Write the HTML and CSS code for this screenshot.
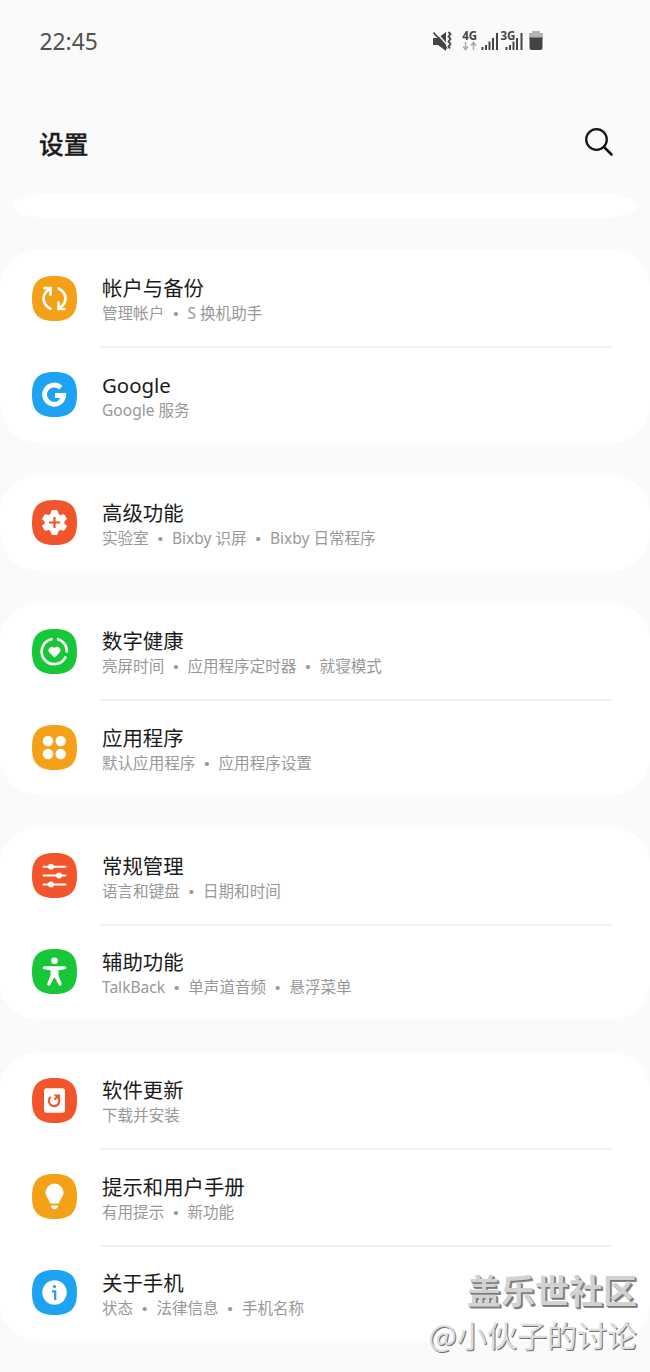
FILE: index.html
```html
<!DOCTYPE html>
<html lang="zh-CN">
<head>
<meta charset="utf-8">
<title>设置</title>
<link rel="stylesheet" href="styles.css">
</head>
<body>
<svg width="0" height="0" class="defs"><defs><path id="tile" d="M22.500 0C38.500 0 45 6.500 45 22.500S38.500 45 22.500 45 0 38.500 0 22.500 6.500 0 22.500 0Z"/></defs></svg>
<div class="status">
  <span class="clock">22:45</span>
  <svg class="status-icons" width="116" height="26" viewBox="0 0 116 26">
    <g fill="#444">
      <path d="M3 9h5l8-6v19l-8-6H3z"/>
      <path d="M4.500 1.500l15 17" stroke="#fafafa" stroke-width="1.500"/>
      <path d="M3.500 3.500l14 16" stroke="#444" stroke-width="1.800"/>
      <path d="M18.500 3l2 2-2 2.500 2 2.500-2 2.500 2 2.500-2 2.500 1.500 2" fill="none" stroke="#fafafa" stroke-width="3.500"/>
      <path d="M18.500 3l2 2-2 2.500 2 2.500-2 2.500 2 2.500-2 2.500 1.500 2" fill="none" stroke="#444" stroke-width="1.800"/>
      <text class="net" x="32.300" y="10.500">4G</text>
      <text class="net" x="70.500" y="10.500">3G</text>
      <path d="M51.500 18h2v3h-2zM55 16h2v5h-2zM58.500 12.500h2V21h-2zM62 9h2v12h-2zM66 4h2v17h-2z"/>
      <path d="M75.500 18h2v3h-2zM79 16h2v5h-2zM82.500 12.500h2V21h-2zM86 9h2v12h-2zM90.500 4h2v17h-2z"/>
      <path d="M35.500 13v7m-2.500-2.500l2.500 3 2.500-3M43.500 21v-7m-2.500 2.500l2.500-3 2.500 3" fill="none" stroke="#aaa" stroke-width="1.500"/>
      <path d="M102 2h8v2h3v6H99V4h3z" fill="#b3b3b3"/>
      <path d="M99.500 8.500h13V19q0 2-2 2h-9q-2 0-2-2z"/>
    </g>
  </svg>
</div>
<header class="header">
  <h1>设置</h1>
  <svg width="30" height="30" viewBox="0 0 30 30" fill="none" stroke="#151515"><circle cx="12.500" cy="12.500" r="10.300" stroke-width="2.300"/><path d="M20 20l7.500 7.500" stroke-width="2.600" stroke-linecap="round"/></svg>
</header>
<div class="card-edge"></div>
<main class="groups">
  <section class="card">
    <div class="row">
      <svg class="icon orange" viewBox="0 0 45 45"><use href="#tile"/><g fill="none" stroke="#fff" stroke-width="2.700" stroke-linecap="round"><path d="M18.500 32.700C9.500 28 9.500 18.500 17 13.500M12.500 12.200h6v6.500M26.500 12.500C35.500 17 35.500 26.500 28 31.500M32.500 33h-6v-6.500"/></g></svg>
      <div class="text"><div class="title">帐户与备份</div><div class="sub">管理帐户<i>•</i>S 换机助手</div></div>
    </div>
    <div class="row">
      <svg class="icon blue" viewBox="0 0 45 45"><use href="#tile"/><path d="M28.800 15.700A9.600 9.600 0 1 0 31.700 23.500H23" fill="none" stroke="#fff" stroke-width="4.800"/></svg>
      <div class="text"><div class="title">Google</div><div class="sub">Google 服务</div></div>
    </div>
  </section>
  <section class="card">
    <div class="row">
      <svg class="icon red" viewBox="0 0 45 45"><use href="#tile"/><path d="M20 10.500h5l1.200 3.800 2 1.200 3.800-.8 2.500 4.300-2.600 2.600v1.800l2.600 2.600-2.500 4.300-3.800-.8-2 1.200-1.200 3.800h-5l-1.200-3.800-2-1.200-3.800.8-2.500-4.300 2.600-2.600v-1.800l-2.600-2.600 2.500-4.300 3.800.8 2-1.200z" fill="#fff" stroke="#fff" stroke-width="1" stroke-linejoin="round"/><path d="M22.500 17v11M17 22.500h11" stroke="#f2552c" stroke-width="2.200"/></svg>
      <div class="text"><div class="title">高级功能</div><div class="sub">实验室<i>•</i>Bixby 识屏<i>•</i>Bixby 日常程序</div></div>
    </div>
  </section>
  <section class="card">
    <div class="row">
      <svg class="icon green" viewBox="0 0 45 45"><use href="#tile"/><path d="M20.500 10A12.600 12.600 0 1 0 33.800 27.500M25 10A12.600 12.600 0 0 1 34.900 23.500" fill="none" stroke="#fff" stroke-width="2.600"/><path d="M22.500 28.700l-5.200-5.200c-2.800-3.300 2.300-8 5.200-4.300 2.900-3.700 8 1 5.200 4.300z" fill="#fff"/></svg>
      <div class="text"><div class="title">数字健康</div><div class="sub">亮屏时间<i>•</i>应用程序定时器<i>•</i>就寝模式</div></div>
    </div>
    <div class="row">
      <svg class="icon orange" viewBox="0 0 45 45"><use href="#tile"/><g fill="#fff"><circle cx="16" cy="16" r="5.200"/><circle cx="28.700" cy="16" r="5.200"/><circle cx="16" cy="29" r="5.200"/><circle cx="28.700" cy="29" r="5.200"/></g></svg>
      <div class="text"><div class="title">应用程序</div><div class="sub">默认应用程序<i>•</i>应用程序设置</div></div>
    </div>
  </section>
  <section class="card">
    <div class="row">
      <svg class="icon red" viewBox="0 0 45 45"><use href="#tile"/><path d="M11.500 13.700h22M11.500 22.500h22M11.500 31.500h22" stroke="#fff" stroke-width="2" stroke-linecap="round"/><g fill="#fff"><circle cx="19" cy="13.700" r="2.900"/><circle cx="27" cy="22.500" r="2.900"/><circle cx="19" cy="31.500" r="2.900"/></g></svg>
      <div class="text"><div class="title">常规管理</div><div class="sub">语言和键盘<i>•</i>日期和时间</div></div>
    </div>
    <div class="row">
      <svg class="icon green" viewBox="0 0 45 45"><use href="#tile"/><g fill="#fff"><circle cx="22.500" cy="11.800" r="3.300"/><path d="M12.200 17.300h20.600q1.500 0 1.500 1.500t-1.500 1.500l-6.300 1v5l3.200 8.500q.4 1.700-1.200 2-1.300.2-1.900-1L22.500 28l-4.100 7.800q-.6 1.200-1.900 1-1.600-.3-1.200-2l3.200-8.500v-5l-6.300-1q-1.500 0-1.500-1.500t1.500-1.500z"/></g></svg>
      <div class="text"><div class="title">辅助功能</div><div class="sub">TalkBack<i>•</i>单声道音频<i>•</i>悬浮菜单</div></div>
    </div>
  </section>
  <section class="card">
    <div class="row">
      <svg class="icon red" viewBox="0 0 45 45"><use href="#tile"/><rect x="12" y="10.300" width="21" height="24.500" rx="2.500" fill="#fff"/><path d="M18.800 18.800a5.200 5.200 0 1 0 7.800 1.500M22.500 21.500l3.500-3.500" fill="none" stroke="#f2552c" stroke-width="2.200"/><path d="M21.500 16.500h6.500v6.500z" fill="#f2552c"/></svg>
      <div class="text"><div class="title">软件更新</div><div class="sub">下载并安装</div></div>
    </div>
    <div class="row">
      <svg class="icon orange" viewBox="0 0 45 45"><use href="#tile"/><path d="M22.500 9.500a9 9 0 0 1 9 9c0 4-3.500 6-4.500 11h-9c-1-5-4.500-7-4.500-11a9 9 0 0 1 9-9zM18.800 31.500h7.400c-.5 5-6.900 5-7.400 0z" fill="#fff"/></svg>
      <div class="text"><div class="title">提示和用户手册</div><div class="sub">有用提示<i>•</i>新功能</div></div>
    </div>
    <div class="row">
      <svg class="icon blue" viewBox="0 0 45 45"><use href="#tile"/><circle cx="22.500" cy="22.500" r="12.200" fill="#fff"/><circle cx="22.500" cy="16.500" r="1.600" fill="#1ea2f2"/><path d="M20 21.300h3.200v8.700" fill="none" stroke="#1ea2f2" stroke-width="2.300"/></svg>
      <div class="text"><div class="title">关于手机</div><div class="sub">状态<i>•</i>法律信息<i>•</i>手机名称</div></div>
    </div>
  </section>
</main>
<div class="watermark"><div class="wm-name">盖乐世社区</div><div class="wm-user">@小伙子的讨论</div></div>
</body>
</html>
```
FILE: styles.css
```css
* { box-sizing: border-box; }
body {
  margin: 0;
  height: 1372px;
  overflow: hidden;
  position: relative;
  background: #fafafa;
  color: #1b1b1b;
  font-family: "Noto Sans", "Noto Sans CJK SC", sans-serif;
}
.defs { display: block; }
.status {
  display: flex;
  justify-content: space-between;
  align-items: center;
  height: 84px;
  padding: 0 104px 0 39.500px;
}
.clock { font-size: 22.8px; line-height: 30px; color: #505050; }
.net { font: bold 11.5px "Open Sans", sans-serif; }
.header {
  display: flex;
  justify-content: space-between;
  align-items: center;
  height: 110px;
  padding: 8px 36px 0 39px;
}
.header h1 {
  margin: 0;
  font: 500 24.7px/36px "Noto Sans CJK SC", sans-serif;
  -webkit-text-stroke: 0.3px #1b1b1b;
}
.header svg { margin-top: -2px; }
.card-edge {
  height: 24px;
  margin: 0 13px 32px;
  background: #fff;
  border-radius: 36px / 12px;
}
.groups { display: grid; gap: 32px; }
.card {
  background: #fff;
  border-radius: 38px;
}
.row {
  display: flex;
  position: relative;
  height: 96.3px;
  padding: 26px 38px 0 32px;
}
.row + .row::before {
  content: "";
  position: absolute;
  top: 0;
  left: 101px;
  right: 38px;
  height: 2px;
  background: #f0f0f0;
}
.icon { width: 45px; height: 45px; flex: none; margin: -0.3px 25.3px 0 -0.3px; }
.orange { fill: #f5a118; }
.blue { fill: #1ea2f2; }
.red { fill: #f2552c; }
.green { fill: #18c737; }
.text { margin-top: -2.6px; white-space: nowrap; }
.title { font-size: 20.4px; line-height: 30px; }
.sub { font-size: 15.55px; line-height: 21px; color: #989898; }
.sub i {
  display: inline-block;
  width: 23.3px;
  text-align: center;
  font-style: normal;
  font-family: "Liberation Sans", sans-serif;
  font-size: 15px;
}
.watermark {
  position: absolute;
  right: 13px;
  bottom: 16px;
  text-align: right;
  white-space: nowrap;
  font-family: "Noto Sans CJK SC", sans-serif;
  color: #d2d2d2;
  text-shadow: 1px 1px 0 #777, 2px 2px 0 #888;
}
.wm-name { font-weight: bold; font-size: 34px; line-height: 44px; }
.wm-user { font-size: 30px; line-height: 44px; color: #dcdcdc; text-shadow: 1px 1px 0 #707070; }
```
